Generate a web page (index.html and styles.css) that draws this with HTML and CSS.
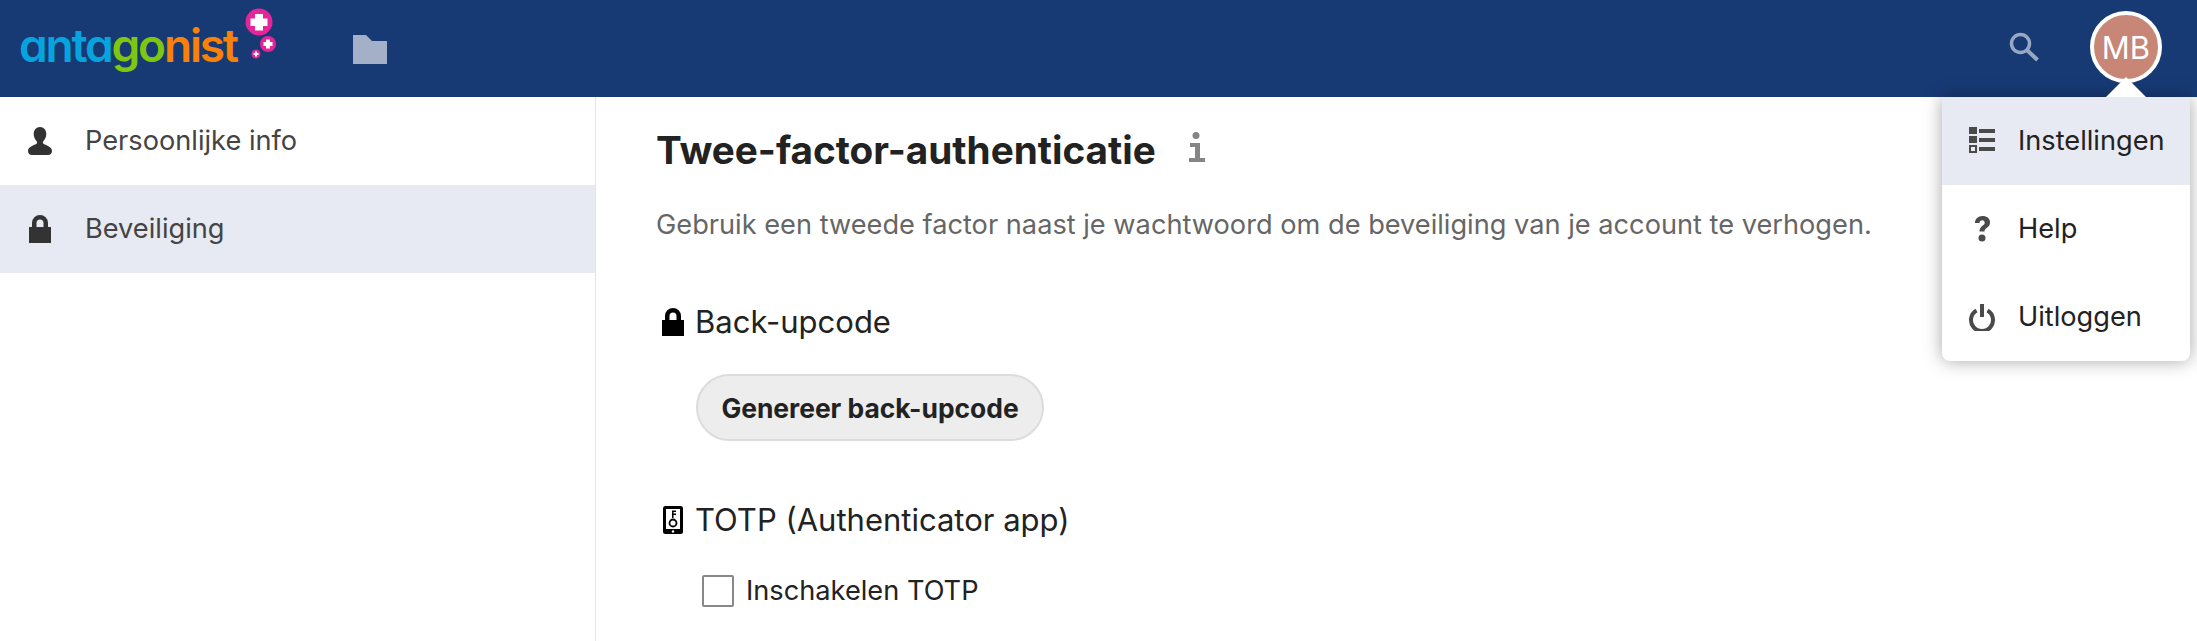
FILE: index.html
```html
<!DOCTYPE html>
<html lang="nl">
<head>
    <meta charset="UTF-8">
    <meta name="viewport" content="width=device-width, initial-scale=1.0">
    <title>Instellingen - Antagonist</title>
    <link rel="stylesheet" href="styles.css">
</head>
<body>
    <!-- Header -->
    <header class="topbar">
        <a class="logo" href="#">
            <span class="logo-text"><span class="logo-blue">anta</span><span class="logo-green">go</span><span class="logo-orange">nist</span></span>
            <svg class="logo-bubbles" width="44" height="56" viewBox="0 0 44 56">
                <circle cx="22" cy="14" r="13.500" fill="#e6249a"/>
                <path d="M18 6h8v4.500h4.500v7.500H26v4.500h-8V18h-4.500v-7.500H18z" fill="#fff"/>
                <circle cx="31" cy="36" r="8" fill="#e6249a"/>
                <path d="M29 31.500h4V34h2.500v4H33v2.500h-4V38h-2.500v-4H29z" fill="#fff"/>
                <circle cx="19" cy="46" r="4.500" fill="#e6249a"/>
                <path d="M18 43.500h2V45h1.500v2H20v1.500h-2V47h-1.500v-2H18z" fill="#fff"/>
            </svg>
        </a>
        <a class="nav-files" href="#">
            <svg width="36" height="30" viewBox="0 0 36 30"><path d="M1 1h13l6 6h15v23H1z" fill="#a3b0c8"/></svg>
        </a>
        <div class="topbar-right">
            <a class="search" href="#">
                <svg width="32" height="32" viewBox="0 0 32 32" fill="none" stroke="#98a8c2" stroke-width="3.500"><circle cx="12.500" cy="12.500" r="9"/><path d="M19 19l10.500 10" stroke-width="4"/></svg>
            </a>
            <div class="avatar">MB</div>
        </div>
    </header>

    <!-- Dropdown -->
    <div class="user-menu">
        <a class="menu-item active" href="#">
            <svg class="menu-icon" width="28" height="28" viewBox="0 0 28 28" fill="#4a4a4a">
                <path d="M1 0h8v7H1zM1 9h8v7H1zM1 18h8v8H1zm2 2v4h4v-4zM11 2h16v4H11zM11 11h16v4H11zM11 20h16v4H11z" fill-rule="evenodd"/>
            </svg>
            <span>Instellingen</span>
        </a>
        <a class="menu-item" href="#">
            <svg class="menu-icon" width="28" height="28" viewBox="0 0 28 28" fill="#4a4a4a">
                <path d="M7 8c0-4 3-7 7.500-7C19 1 22 3.500 22 7.500c0 3-1.800 4.300-3.400 5.500-1.300 1-2.100 1.700-2.100 3.500h-5c0-3.200 1.400-4.600 3-5.800 1.200-.9 2.200-1.600 2.200-3 0-1.500-1-2.400-2.500-2.400-1.700 0-2.600 1.100-2.700 2.700z"/>
                <circle cx="14" cy="23" r="3.500"/>
            </svg>
            <span>Help</span>
        </a>
        <a class="menu-item" href="#">
            <svg class="menu-icon" width="28" height="28" viewBox="0 0 28 28" fill="none" stroke="#4a4a4a" stroke-width="4">
                <path d="M8.500 7.500a11 11 0 1 0 11 0"/>
                <path d="M14 1v13"/>
            </svg>
            <span>Uitloggen</span>
        </a>
    </div>

    <div class="page">
        <!-- Sidebar -->
        <nav class="sidebar">
            <a class="side-item" href="#">
                <svg class="side-icon" width="28" height="28" viewBox="0 0 28 28" fill="#333">
                    <path d="M14 0c3.800 0 6.300 3 6.300 7 0 3-1.300 5.600-3 7.200-.6.600-.5 2.200.5 2.900 2.500 1.600 8.200 2.400 8.200 7 0 2.700-1.800 3.900-4 3.900H6c-2.200 0-4-1.200-4-3.900 0-4.600 5.700-5.400 8.200-7 1-.7 1.100-2.300.5-2.900-1.700-1.600-3-4.200-3-7.200 0-4 2.500-7 6.300-7z"/>
                </svg>
                <span>Persoonlijke info</span>
            </a>
            <a class="side-item active" href="#">
                <svg class="side-icon" width="28" height="28" viewBox="0 0 28 28" fill="#333">
                    <path d="M3 12h3V8a8 8 0 0 1 16 0v4h3v16H3zM10.500 12h7V8a3.500 3.500 0 0 0-7 0z" fill-rule="evenodd"/>
                </svg>
                <span>Beveiliging</span>
            </a>
        </nav>

        <!-- Content -->
        <main class="content">
            <div class="title-row">
                <h2>Twee-factor-authenticatie</h2>
                <svg class="info-icon" width="18" height="32" viewBox="0 0 18 32" fill="#858585">
                    <circle cx="8" cy="3.500" r="3.500"/>
                    <path d="M2 11h10v15h5v4H1v-4h6V15H2z"/>
                </svg>
            </div>
            <p class="description">Gebruik een tweede factor naast je wachtwoord om de beveiliging van je account te verhogen.</p>

            <h3 class="provider">
                <svg class="provider-icon" width="28" height="28" viewBox="0 0 28 28" fill="#000">
                    <path d="M3 12h3V8a8 8 0 0 1 16 0v4h3v16H3zM10.500 12h7V8a3.500 3.500 0 0 0-7 0z" fill-rule="evenodd"/>
                </svg>
                Back-upcode
            </h3>
            <button class="btn" type="button">Genereer back-upcode</button>

            <h3 class="provider provider-totp">
                <svg class="provider-icon" width="28" height="28" viewBox="0 0 28 28">
                    <rect x="4" y="0" width="20" height="28" rx="2.500" fill="#000"/>
                    <rect x="7" y="3" width="14" height="20" fill="#fff"/>
                    <circle cx="14" cy="25.500" r="1.200" fill="#fff"/>
                    <path d="M13 4.500h4v1.500h-2.500v1.500H17V9h-2.500v3H13z" fill="#000"/>
                    <circle cx="14" cy="17" r="3.500" fill="none" stroke="#000" stroke-width="1.800"/>
                </svg>
                TOTP (Authenticator app)
            </h3>
            <label class="check">
                <input type="checkbox">
                <span class="check-box"></span>
                Inschakelen TOTP
            </label>
        </main>
    </div>
</body>
</html>
```

FILE: styles.css
```css
* {
    box-sizing: border-box;
}

html,
body {
    height: 100%;
}

body {
    margin: 0;
    overflow: hidden;
    display: flex;
    flex-direction: column;
    font-family: Inter, "Noto Sans", Arial, sans-serif;
    color: #222;
    background-color: #fff;
}

a {
    color: inherit;
    text-decoration: none;
}

/* Header */
.topbar {
    flex: none;
    height: 97px;
    display: flex;
    align-items: center;
    background-color: #173a75;
}

.logo {
    display: flex;
    align-items: flex-start;
    width: 352px;
    height: 97px;
    padding: 0 0 0 19px;
}

.logo-text {
    margin-top: 16px;
    font-family: Inter, sans-serif;
    font-feature-settings: "cv11";
    font-size: 46px;
    line-height: 58px;
    font-weight: 600;
    letter-spacing: -2.200px;
}

.logo-blue {
    color: #06a4de;
}

.logo-green {
    color: #7ec60f;
}

.logo-orange {
    color: #f98108;
}

.logo-bubbles {
    margin: 8px 0 0 0;
}

.nav-files {
    display: flex;
}

.topbar-right {
    display: flex;
    align-items: center;
    margin-left: auto;
    padding-right: 35px;
}

.search {
    display: flex;
    margin-right: 50px;
    margin-top: -3px;
}

.avatar {
    width: 72px;
    height: 72px;
    border: 4px solid #fff;
    border-radius: 50%;
    display: flex;
    align-items: center;
    justify-content: center;
    background-color: #c88677;
    color: #fff;
    font-size: 31px;
    margin-bottom: 3px;
}

/* Dropdown */
.user-menu {
    position: absolute;
    top: 97px;
    right: 7px;
    width: 248px;
    background-color: #fff;
    border-radius: 0 0 8px 8px;
    box-shadow: 0 0 18px rgba(0, 0, 0, 0.35);
    z-index: 2;
}

.user-menu::before {
    content: "";
    position: absolute;
    top: -20px;
    right: 44px;
    border: 20px solid transparent;
    border-top: 0;
    border-bottom-color: #fff;
}

.menu-item {
    height: 88px;
    display: flex;
    align-items: center;
    padding-left: 26px;
    font-size: 27.200px;
}

.menu-item span {
    padding-bottom: 2px;
}

.menu-item.active {
    background-color: #e7eaf2;
}

.menu-icon {
    margin-right: 22px;
}

/* Sidebar */
.page {
    flex: 1;
    display: flex;
    min-height: 0;
}

.sidebar {
    flex: none;
    width: 596px;
    border-right: 1px solid #e4e4e4;
}

.side-item {
    height: 88px;
    display: flex;
    align-items: center;
    padding-left: 26px;
    font-size: 27.200px;
    color: #444;
}

.side-item span {
    padding-bottom: 2px;
}

.side-item.active {
    background-color: #e7eaf2;
}

.side-icon {
    margin-right: 31px;
}

/* Content */
.content {
    flex: 1;
    padding: 31px 0 0 60px;
}

.title-row {
    display: flex;
    align-items: center;
    height: 44px;
}

h2 {
    margin: 0;
    font-size: 38.700px;
    line-height: 44px;
    font-weight: 700;
    color: #222;
}

.info-icon {
    margin-left: 32px;
    margin-top: -5px;
}

.description {
    margin: 35px 0 0;
    font-size: 27.200px;
    line-height: 36px;
    color: #666;
}

.provider {
    display: flex;
    align-items: center;
    margin: 59px 0 0;
    font-size: 31px;
    line-height: 40px;
    font-weight: 400;
    color: #222;
}

.provider-icon {
    margin-right: 8px;
    margin-left: 3px;
}

.provider-totp {
    margin-top: 59px;
}

.btn {
    display: block;
    margin: 32px 0 0 40px;
    width: 348px;
    height: 67px;
    padding: 0;
    border: 2px solid #dcdcdc;
    border-radius: 34px;
    background-color: #ededed;
    color: #222;
    font-family: inherit;
    font-size: 26.400px;
    font-weight: 700;
}

.check {
    display: flex;
    align-items: center;
    margin: 33px 0 0 46px;
    font-size: 27.200px;
    line-height: 36px;
    color: #222;
}

.check input {
    display: none;
}

.check-box {
    width: 32px;
    height: 32px;
    margin-right: 12px;
    border: 2px solid #888;
    border-radius: 2px;
    background-color: #fff;
}
```
